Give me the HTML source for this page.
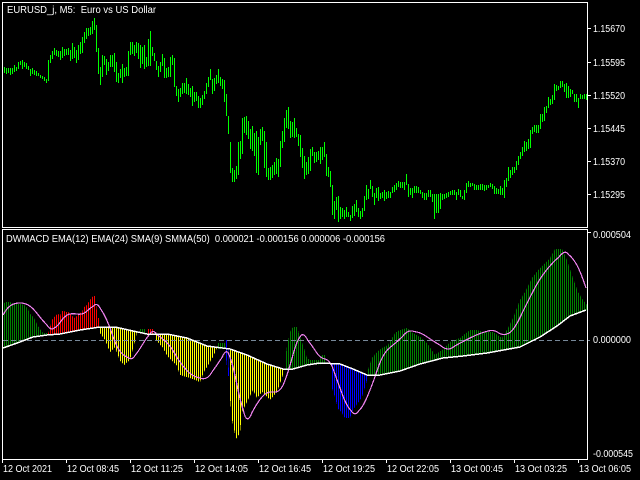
<!DOCTYPE html>
<html lang="en">
<head>
<meta charset="utf-8">
<title>EURUSD_j, M5 DWMACD</title>
<style>
html,body{margin:0;padding:0;background:#000;width:640px;height:480px;overflow:hidden}
svg{display:block}
text{font-family:"Liberation Sans",sans-serif;font-size:10px;fill:#fff;white-space:pre}
</style>
</head>
<body>
<svg width="640" height="480" viewBox="0 0 640 480" xmlns="http://www.w3.org/2000/svg">
<defs>
<pattern id="g" width="2" height="1" patternUnits="userSpaceOnUse"><rect width="1" height="1" fill="#008000"/></pattern>
<pattern id="r" width="2" height="1" patternUnits="userSpaceOnUse"><rect width="1" height="1" fill="#f00"/></pattern>
<pattern id="y" width="2" height="1" patternUnits="userSpaceOnUse"><rect width="1" height="1" fill="#ff0"/></pattern>
<pattern id="b" width="2" height="1" patternUnits="userSpaceOnUse"><rect width="1" height="1" fill="#00f"/></pattern>
</defs>
<rect width="640" height="480" fill="#000"/>

<!-- price bars -->
<path transform="translate(.5 0)" shape-rendering="crispEdges" fill="none" stroke="#0f0" stroke-width="1" d="M4 67V73M6 68V74M8 68V73M10 68V75M12 68V74M14 65V72M16 67V71M18 62V69M20 61V65M22 60V69M24 62V67M26 63V69M28 66V70M30 69V76M32 68V74M34 70V75M36 71V76M38 73V76M40 75V78M42 76V79M44 77V81M46 79V83M48 60V81M50 55V63M52 51V59M54 48V55M56 50V56M58 51V57M60 51V60M62 47V58M64 49V56M66 49V55M68 48V55M70 50V61M72 43V59M74 47V58M76 50V63M78 45V60M80 42V54M82 37V53M84 32V43M86 28V39M88 28V36M90 27V35M92 21V34M94 18V30M96 25V52M98 48V74M100 67V85M102 55V77M104 56V65M106 59V75M108 62V71M110 55V67M112 55V67M114 53V72M116 62V82M118 73V83M120 69V78M122 64V83M124 68V77M126 67V76M128 51V76M130 42V55M132 42V54M134 45V56M136 42V53M138 43V59M140 45V68M142 47V64M144 45V69M146 57V67M148 39V66M150 31V66M152 47V56M154 53V61M156 61V70M158 66V77M160 62V72M162 54V66M164 58V78M166 68V78M168 67V77M170 57V77M172 55V65M174 58V87M176 86V96M178 89V102M180 88V97M182 83V94M184 83V93M186 78V94M188 84V95M190 88V97M192 86V106M194 92V102M196 92V101M198 96V108M200 98V108M202 95V105M204 91V99M206 83V94M208 77V87M210 69V80M212 79V94M214 78V91M216 75V84M218 69V83M220 77V86M222 79V89M224 80V102M226 94V116M228 116V134M230 142V173M232 168V182M234 170V182M236 166V179M238 142V175M240 141V159M242 118V154M244 117V133M246 116V135M248 121V139M250 129V149M252 126V151M254 133V156M256 131V173M258 137V175M260 129V145M262 127V141M264 131V168M266 142V177M268 168V180M270 167V180M272 165V178M274 162V175M276 158V174M278 159V177M280 141V167M282 131V148M284 118V142M286 110V128M288 107V129M290 121V138M292 122V137M294 118V138M296 128V137M298 134V146M300 135V157M302 148V168M304 156V179M306 162V175M308 157V174M310 149V171M312 147V156M314 152V163M316 152V162M318 151V160M320 147V164M322 147V160M324 142V157M326 154V176M328 167V177M330 171V187M332 185V215M334 201V219M336 197V210M338 196V222M340 207V219M342 208V217M344 210V219M346 207V217M348 212V217M350 215V221M352 206V218M354 204V216M356 200V212M358 208V217M360 211V219M362 208V217M364 196V211M366 185V200M368 189V199M370 180V189M372 186V197M374 193V205M376 188V198M378 187V201M380 193V199M382 192V198M384 190V201M386 192V199M388 191V198M390 192V198M392 187V193M394 185V192M396 183V190M398 181V187M400 182V188M402 182V188M404 182V190M406 174V185M408 184V197M410 188V195M412 188V198M414 186V193M416 186V193M418 187V193M420 190V194M422 192V198M424 193V200M426 193V200M428 190V197M430 190V197M432 194V202M434 194V219M436 194V213M438 194V213M440 193V209M442 194V200M444 194V199M446 193V198M448 192V197M450 191V195M452 190V195M454 190V195M456 192V200M458 189V195M460 190V197M462 196V199M464 190V200M466 183V193M468 181V187M470 183V187M472 183V186M474 184V190M476 185V190M478 185V190M480 184V190M482 184V190M484 185V191M486 185V190M488 185V188M490 183V187M492 184V189M494 186V194M496 188V194M498 189V194M500 186V195M502 188V195M504 180V198M506 178V187M508 167V181M510 170V178M512 167V175M514 167V173M516 161V170M518 156V165M520 152V159M522 147V156M524 141V152M526 142V151M528 139V149M530 130V148M532 127V134M534 125V132M536 125V133M538 125V133M540 114V129M542 114V122M544 107V121M546 106V113M548 97V108M550 99V105M552 95V104M554 84V100M556 85V91M558 86V90M560 81V88M562 81V87M564 84V92M566 83V98M568 86V98M570 89V97M572 90V94M574 94V102M576 94V102M578 98V108M580 94V99M582 95V99M584 94V99M586 94V100"/>

<!-- histogram -->
<g shape-rendering="crispEdges">
<polygon fill="url(#g)" points="4,303 6,302 8,302 10,302 12,303 14,304 20,304 24,305 26,307 28,309 30,314 32,316 34,318 36,322 38,326 40,329 42,332 44,333 47,333 47,335 33,337 20,342 4,348"/>
<polygon fill="url(#r)" points="48,334 50,327 52,320 54,317 56,315 58,314 60,316 62,311 64,311 66,312 68,312 70,313 72,316 74,318 76,317 78,314 80,313 82,312 84,307 86,306 88,303 90,300 92,297 94,296 95,296 96,304 98,318 99,318 100,327 80,330 60,334 48,335"/>
<polygon fill="url(#y)" points="100,327 115,327 133,331 137,332 136,337 130,360 124,365 120,361 115,347 110,352 105,340 100,333"/>
<polygon fill="url(#g)" points="140,329 146,329 146,334 140,333"/>
<polygon fill="url(#r)" points="148,329 154,329 154,334 148,334"/>
<polygon fill="url(#y)" points="156,334 167,334 187,338 207,346 218,348 217,348 213,357 204,372 200,382 190,378 180,375 177,366 168,357 163,348 156,340"/>
<polygon fill="url(#g)" points="218,343 225,343 225,349 218,349"/>
<polygon fill="url(#b)" points="226,340 228,340 229,376 228,376 226,358"/>
<polygon fill="url(#y)" points="230,349 247,355 267,364 284,369 284,372 277,392 270,400 262,392 257,398 253,390 248,400 244,408 242,412 240,433 236,439 232,420 230,398"/>
<polygon fill="url(#g)" points="285,360 287,346 290,332 293,327 297,327 300,337 303,345 307,358 310,360 320,360 321,355 325,355 325,364 307,365 293,369 285,369"/>
<polygon fill="url(#b)" points="332,364 340,364 353,369 368,375 368,377 365,387 362,397 358,403 353,410 350,418 345,418 342,413 338,409 335,397 332,388"/>
<polygon fill="url(#g)" points="368,370 372,358 377,352 382,348 388,345 395,333 400,330 407,328 413,333 420,337 427,343 435,355 442,350 450,342 460,338 470,330 477,330 483,332 493,332 502,338 508,328 513,318 520,300 525,292 532,278 540,268 550,258 555,249 562,249 567,260 573,278 578,292 583,300 587,305 587,310 570,316 557,326 540,337 520,347 487,353 463,356 443,358 420,364 400,371 380,375 368,375"/>
</g>

<!-- zero level -->
<line x1="3" y1="340.5" x2="590" y2="340.5" stroke="#778899" stroke-width="1" stroke-dasharray="5 3" shape-rendering="crispEdges"/>

<!-- signal & main lines -->
<path fill="none" stroke="#ee82ee" stroke-width="1.2" shape-rendering="crispEdges" d="M3 315L5.5 311Q8 307 11.5 305Q15 303 20 303Q25 303 29 305.5Q33 308 37.5 314Q42 320 46.5 324.5Q51 331 54 328Q57 327 60 322.5Q63 318 66.5 315.5Q70 313 76.5 314Q83 315 86.5 311.5Q90 308 93.5 306Q97 302 100 308Q103 312 106.5 319.5Q110 327 112.5 335Q115 343 118.5 349Q122 355 127 357Q132 361 135 355.5Q138 352 142.5 344.5Q147 337 150 334Q153 329 156.5 334Q160 337 165 341Q170 345 175 354Q180 363 186.5 370Q193 377 200 378Q207 381 212 372Q217 365 222 357.5Q227 346 230 357.5Q233 365 236.5 382.5Q240 400 243.5 411Q247 426 252 412.5Q257 403 262 397Q267 391 273.5 392Q280 393 284 383Q288 373 292.5 356.5Q297 340 300 337Q303 331 308 340.5Q313 347 316.5 352.5Q320 358 325 359Q330 360 333.5 370Q337 380 342 393.5Q347 407 351 410.5Q355 417 359 410.5Q363 407 368 395Q373 383 378 368Q383 353 390 347.5Q397 342 402.5 336.5Q408 329 414 331.5Q420 332 426.5 336.5Q433 341 440.5 345.5Q448 352 454 346.5Q460 343 470 338Q480 333 486.5 331.5Q493 329 498 332.5Q503 336 508 333.5Q513 332 520 317.5Q527 303 533.5 290.5Q540 278 546.5 270Q553 262 559 257Q565 249 568.5 254.5Q572 257 576 263.5Q580 270 586 288"/>
<polyline fill="none" stroke="#fff" stroke-width="1.5" shape-rendering="crispEdges" points="3,348 20,342 33,337 47,335 60,334 80,330 100,327 115,327 133,331 147,334 167,334 187,338 207,346 230,349 247,355 267,364 283,369 293,369 307,365 320,363 340,364 353,369 367,375 380,375 400,371 420,364 443,358 463,356 487,353 520,347 540,337 557,326 570,316 586,310"/>

<!-- frames and ticks -->
<g fill="none" stroke="#fff" stroke-width="1" shape-rendering="crispEdges">
<rect x="2.5" y="2.5" width="585" height="225"/>
<rect x="2.5" y="229.5" width="585" height="230"/>
<path d="M588 28.5H591M588 62.5H591M588 95.5H591M588 128.5H591M588 161.5H591M588 194.5H591M588 232.5H591"/>
<path d="M2.5 460V463M66.5 460V463M130.5 460V463M194.5 460V463M258.5 460V463M322.5 460V463M386.5 460V463M450.5 460V463M514.5 460V463M578.5 460V463"/>
</g>

<!-- labels -->
<text x="7" y="13" textLength="149" lengthAdjust="spacingAndGlyphs">EURUSD_j, M5:  Euro vs US Dollar</text>
<text x="6" y="242" textLength="379" lengthAdjust="spacingAndGlyphs">DWMACD EMA(12) EMA(24) SMA(9) SMMA(50)  0.000021 -0.000156 0.000006 -0.000156</text>
<text x="593" y="32" textLength="32" lengthAdjust="spacingAndGlyphs">1.15670</text>
<text x="593" y="66" textLength="32" lengthAdjust="spacingAndGlyphs">1.15595</text>
<text x="593" y="99" textLength="32" lengthAdjust="spacingAndGlyphs">1.15520</text>
<text x="593" y="132" textLength="32" lengthAdjust="spacingAndGlyphs">1.15445</text>
<text x="593" y="165" textLength="32" lengthAdjust="spacingAndGlyphs">1.15370</text>
<text x="593" y="198" textLength="32" lengthAdjust="spacingAndGlyphs">1.15295</text>
<text x="593" y="238" textLength="38" lengthAdjust="spacingAndGlyphs">0.000504</text>
<text x="593" y="343" textLength="38" lengthAdjust="spacingAndGlyphs">0.000000</text>
<text x="593" y="457" textLength="40" lengthAdjust="spacingAndGlyphs">-0.000545</text>
<text x="3" y="472" textLength="49" lengthAdjust="spacingAndGlyphs">12 Oct 2021</text>
<text x="67" y="472" textLength="52" lengthAdjust="spacingAndGlyphs">12 Oct 08:45</text>
<text x="131" y="472" textLength="52" lengthAdjust="spacingAndGlyphs">12 Oct 11:25</text>
<text x="195" y="472" textLength="53" lengthAdjust="spacingAndGlyphs">12 Oct 14:05</text>
<text x="259" y="472" textLength="52" lengthAdjust="spacingAndGlyphs">12 Oct 16:45</text>
<text x="323" y="472" textLength="52" lengthAdjust="spacingAndGlyphs">12 Oct 19:25</text>
<text x="387" y="472" textLength="52" lengthAdjust="spacingAndGlyphs">12 Oct 22:05</text>
<text x="451" y="472" textLength="52" lengthAdjust="spacingAndGlyphs">13 Oct 00:45</text>
<text x="515" y="472" textLength="52" lengthAdjust="spacingAndGlyphs">13 Oct 03:25</text>
<text x="579" y="472" textLength="52" lengthAdjust="spacingAndGlyphs">13 Oct 06:05</text>
</svg>
</body>
</html>
